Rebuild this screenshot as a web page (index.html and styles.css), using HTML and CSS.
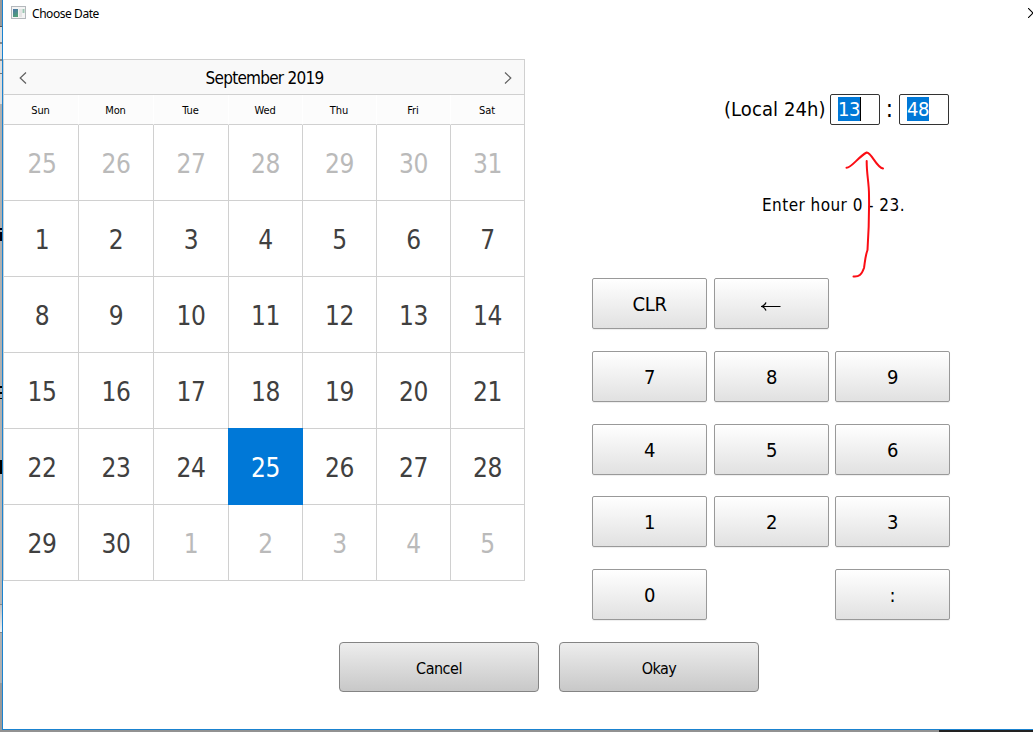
FILE: index.html
```
<!DOCTYPE html>
<html lang="en">
<head>
<meta charset="utf-8">
<title>Choose Date</title>
<link rel="stylesheet" href="styles.css">
</head>
<body>
<div class="window">
  <header class="titlebar">
    <svg class="app-icon" width="15" height="13" viewBox="0 0 15 13"><defs><linearGradient id="pane" x1="0" y1="0" x2="0.4" y2="1"><stop offset="0" stop-color="#4a73a8"/><stop offset="1" stop-color="#4f9e78"/></linearGradient></defs><rect x=".5" y=".5" width="14" height="12" fill="#f4f4f4" stroke="#b4b8bc"/><rect x="2" y="3" width="5" height="8" fill="url(#pane)"/><rect x="8" y="3" width="3" height="8" fill="#e4e4e4"/><rect x="11.500" y="3" width="2" height="4" fill="#9cc8b4"/></svg>
    <span class="title">Choose Date</span>
    <svg class="close" width="10" height="10" viewBox="0 0 10 10"><path d="M0 0L10 10M0 10L10 0" fill="none" stroke="#000" stroke-width="1.1"/></svg>
  </header>
  <main class="content">
    <section class="calendar">
      <div class="month">
        <svg width="8" height="12" viewBox="0 0 8 12"><path d="M7 .5L1.200 6L7 11.500" fill="none" stroke="#606060" stroke-width="1.200"/></svg>
        <span class="month-name">September 2019</span>
        <svg width="8" height="12" viewBox="0 0 8 12"><path d="M1 .5L6.800 6L1 11.500" fill="none" stroke="#606060" stroke-width="1.200"/></svg>
      </div>
      <div class="week names"><span>Sun</span><span>Mon</span><span>Tue</span><span>Wed</span><span>Thu</span><span>Fri</span><span>Sat</span></div>
      <div class="week"><span class="out">25</span><span class="out">26</span><span class="out">27</span><span class="out">28</span><span class="out">29</span><span class="out">30</span><span class="out">31</span></div>
      <div class="week"><span>1</span><span>2</span><span>3</span><span>4</span><span>5</span><span>6</span><span>7</span></div>
      <div class="week"><span>8</span><span>9</span><span>10</span><span>11</span><span>12</span><span>13</span><span>14</span></div>
      <div class="week"><span>15</span><span>16</span><span>17</span><span>18</span><span>19</span><span>20</span><span>21</span></div>
      <div class="week"><span>22</span><span>23</span><span>24</span><span class="selected">25</span><span>26</span><span>27</span><span>28</span></div>
      <div class="week"><span>29</span><span>30</span><span class="out">1</span><span class="out">2</span><span class="out">3</span><span class="out">4</span><span class="out">5</span></div>
    </section>
    <section class="time">
      <div class="time-row">
        <span class="label">(Local 24h)</span>
        <div class="field"><span class="marked caret">13</span></div>
        <span class="colon">:</span>
        <div class="field"><span class="marked">48</span></div>
      </div>
      <p class="hint">Enter hour 0 - 23.</p>
      <div class="keypad">
        <button>CLR</button><button><svg class="back" width="20" height="10" viewBox="0 0 20 10"><path d="M1 5.500H19.500" stroke="#000" fill="none"/><path d="M5 1.500Q4 4.500 .5 5.500Q4 6.500 5 9.500" fill="none" stroke="#000" stroke-width="1.300"/></svg></button><i></i>
        <button>7</button><button>8</button><button>9</button>
        <button>4</button><button>5</button><button>6</button>
        <button>1</button><button>2</button><button>3</button>
        <button>0</button><i></i><button>:</button>
      </div>
    </section>
  </main>
  <footer class="actions"><button class="cancel">Cancel</button><button class="okay">Okay</button></footer>
</div>
<svg class="arrow" width="44" height="130" viewBox="843 150 44 130"><path d="M846.500 167.700C852 167.500 858 157 866.700 152.500C872 153 876 167 883 168.500M866.700 161C866.500 174 869 182 869 195C869.300 214 868.500 235 867.500 250C865 257 865 262 864 268C861.500 275 859 277 853.500 276.500" fill="none" stroke="#fb0d14" stroke-width="2" stroke-linecap="round" stroke-linejoin="round"/></svg>
</body>
</html>
```
FILE: styles.css
```
* { box-sizing: border-box; }
body {
  margin: 0;
  width: 1033px;
  height: 732px;
  overflow: hidden;
  padding-left: 2px;
  font-family: "DejaVu Sans Condensed", "DejaVu Sans", sans-serif;
  font-stretch: condensed;
  color: #000;
  background:
    linear-gradient(#222, #222) 939px 730px / 94px 2px no-repeat,
    linear-gradient(#929292, #929292) 0 730px / 939px 2px no-repeat,
    linear-gradient(#999 0 26px, #555 26px 27px, #ddd 27px 42px, #888 42px 44px, #ddd 44px 59px, #888 59px 61px, #ddd 61px 73px, #777 73px 74px, #ddd 74px 104px, #b0b0b0 104px 228px, #001 228px 230px, #b0b0b0 230px 232px, #001 232px 241px, #b0b0b0 241px 386px, #000 386px 388px, #b0b0b0 388px 392px, #000 392px 394px, #b0b0b0 394px 398px, #000 398px 399px, #b0b0b0 399px 460px, #000 460px 474px, #b5b5b5 474px 604px, #888 604px 605px, #c0c0c0 605px, #f0f0f0 632px, #888 632px 633px, #b0b0b0 633px 683px, #999 683px);
}
.window {
  display: flex;
  flex-direction: column;
  height: 730px;
  background: #fff;
  border-left: 1px solid #1a83d0;
  border-bottom: 1px solid #1a83d0;
}
.titlebar {
  display: flex;
  align-items: center;
  height: 59px;
  padding: 0 0 32px 8px;
  overflow: hidden;
}
.app-icon { margin-top: -2px; }
.title {
  margin-left: 6px;
  font: 12px/16px "Noto Sans", "Open Sans", sans-serif;
  letter-spacing: -.44px;
}
.close { flex: none; margin: -1px -5px 0 auto; }
.content { display: flex; height: 583px; }
.calendar {
  width: 522px;
  height: 522px;
  border: solid #d0d0d0;
  border-width: 1px 0 0 1px;
}
.month {
  display: flex;
  justify-content: space-between;
  align-items: center;
  height: 35px;
  padding: 2px 12px 0 15px;
  background: #f9f9f9;
  border: solid #d0d0d0;
  border-width: 0 1px 1px 0;
}
.month-name { margin-right: 2px; font-size: 17px; letter-spacing: -.75px; }
.week {
  display: grid;
  grid-template-columns: repeat(3, 75px) repeat(4, 74px);
  height: 76px;
  font-size: 26px;
  letter-spacing: -.5px;
  color: #404040;
}
.week span {
  display: flex;
  align-items: center;
  justify-content: center;
  padding-top: 3px;
  border: solid #d0d0d0;
  border-width: 0 1px 1px 0;
}
.week span:first-child { padding-left: 2px; }
.week .out { color: #bababa; }
.names {
  height: 30px;
  font-size: 11px;
  letter-spacing: -.1px;
  color: #000;
  background: #fcfcfc;
}
.names span { padding: 2px 1px 0 0; border-right-color: #fff; }
.week.names span:first-child { padding-left: 0; }
.names span:last-child { border-right-color: #d0d0d0; }
.week .selected {
  margin: -1px 0 0 -1px;
  padding: 4px 0 0 1px;
  background: #0078d7;
  border-color: #0078d7;
  color: #fff;
}
.time { width: 425px; padding: 35px 0 0 67px; }
.time-row { display: flex; height: 31px; padding-left: 132px; font-size: 20px; }
.label { width: 106px; line-height: 31px; letter-spacing: .08px; white-space: nowrap; }
.field {
  width: 50px;
  height: 31px;
  padding: 2px 0 0 7px;
  border: 1px solid #333;
  border-radius: 2px;
}
.marked {
  display: block;
  width: 22px;
  height: 24px;
  line-height: 25px;
  letter-spacing: -.5px;
  background: #0078d7;
  color: #fff;
}
.caret { width: 23px; border-right: 1px solid #000; }
.colon { width: 19px; line-height: 31px; text-align: center; font-size: 24px; }
.hint {
  margin: 0;
  padding: 69px 0 0 170px;
  height: 153px;
  font-size: 17px;
  letter-spacing: .44px;
  line-height: 22px;
  white-space: nowrap;
}
.keypad {
  display: grid;
  grid-template-columns: 122px 121px 115px;
  grid-template-rows: 73px 73px 72px 73px 51px;
}
button {
  display: flex;
  align-items: center;
  justify-content: center;
  width: 115px;
  height: 51px;
  padding: 1px 0 0;
  font: inherit;
  font-size: 20px;
  letter-spacing: -.3px;
  color: #000;
  border: 1px solid #999;
  border-radius: 2px;
  background: linear-gradient(#fff, #e1e1e1);
  box-shadow: 0 1px 1px #eee;
}
.back { margin: 4px 1px 0 0; }
.actions { display: flex; gap: 20px; padding-left: 336px; }
.actions button {
  width: 200px;
  height: 50px;
  padding-top: 2px;
  font-size: 16px;
  letter-spacing: -.5px;
  border-color: #848484;
  border-radius: 4px;
  background: linear-gradient(#ededed, #c8c8c8);
  box-shadow: none;
}
.arrow { position: absolute; left: 843px; top: 150px; }
```
